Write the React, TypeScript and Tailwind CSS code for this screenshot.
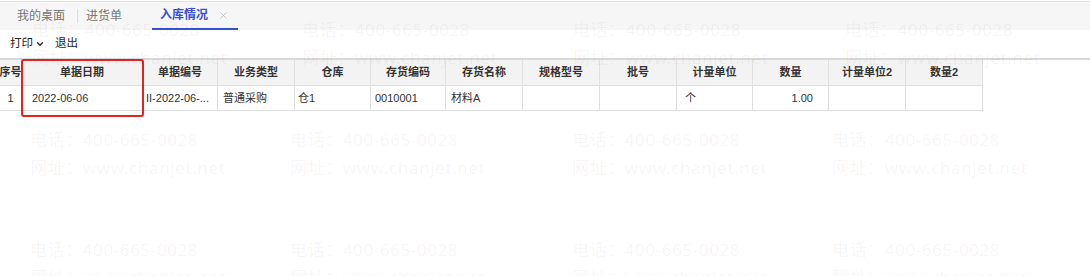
import { ChevronDown, X } from 'lucide-react';

const columns = [
  { title: '序号', width: 'w-[22px]' },
  { title: '单据日期', width: 'w-[121px]' },
  { title: '单据编号', width: 'w-[75px]' },
  { title: '业务类型', width: 'w-[77px]' },
  { title: '仓库', width: 'w-[76px]' },
  { title: '存货编码', width: 'w-[75px]' },
  { title: '存货名称', width: 'w-[77px]' },
  { title: '规格型号', width: 'w-[77px]' },
  { title: '批号', width: 'w-[77px]' },
  { title: '计量单位', width: 'w-[76px]' },
  { title: '数量', width: 'w-[76px]' },
  { title: '计量单位2', width: 'w-[77px]' },
  { title: '数量2', width: 'w-[77px]' },
];

// one row of data, padding per cell matches the screenshot
const row = [
  { text: '1', cls: 'justify-center' },
  { text: '2022-06-06', cls: 'pl-[10px]' },
  { text: 'II-2022-06-...', cls: 'pl-[3px]' },
  { text: '普通采购', cls: 'pl-[5px]' },
  { text: '仓1', cls: 'pl-[3px]' },
  { text: '0010001', cls: 'pl-[4px]' },
  { text: '材料A', cls: 'pl-[5px]' },
  { text: '', cls: '' },
  { text: '', cls: '' },
  { text: '个', cls: 'pl-[8px]' },
  { text: '1.00', cls: 'justify-end pr-[15px]' },
  { text: '', cls: '' },
  { text: '', cls: '' },
];

function Watermark({ className }: { className: string }) {
  return (
    <div
      className={`absolute flex flex-col text-[17px] leading-[28px] tracking-[0.6px] text-black/[0.05] whitespace-nowrap ${className}`}
      style={{ fontFamily: "'Noto Sans', 'Noto Sans CJK SC', sans-serif" }}
    >
      <span>电话：400-665-0028</span>
      <span>网址：www.chanjet.net</span>
    </div>
  );
}

export default function App() {
  return (
    <div
      className="relative w-[1090px] h-[276px] overflow-hidden bg-white text-[12px] text-[#333]"
      style={{ fontFamily: "'Liberation Sans', 'Noto Sans CJK SC', sans-serif" }}
    >
      {/* tab bar */}
      <div className="pt-px">
        <div className="flex items-end h-[29px] border-t border-[#e2e2e2] bg-[#f6f6f6]">
          <div className="flex items-center h-[28px]">
            <span className="pl-[17px] pr-[12px] text-[#777]">我的桌面</span>
            <span className="w-px h-[14px] bg-[#dcdcdc]" />
            <span className="pl-[8px] pr-[30px] text-[#777]">进货单</span>
          </div>
          <div className="flex items-center gap-[10px] h-[28px] pl-[8px] pr-[9px] border-b-2 border-[#3550d6]">
            <span className="font-bold text-[#3550d6]">入库情况</span>
            <X size={11} strokeWidth={1.5} className="text-[#b0b0b0]" />
          </div>
        </div>
      </div>

      {/* toolbar */}
      <div className="flex items-center h-[28px] pl-[10px] gap-[10px] text-[11.5px] text-[#222]">
        <span className="flex items-center gap-[2px]">
          打印
          <ChevronDown size={10} strokeWidth={3} />
        </span>
        <span>退出</span>
      </div>

      {/* table */}
      <div className="border-t-2 border-[#d8d8d8] text-[11px]">
        <div className="flex h-[26px] bg-[#f3f3f3] border-b border-[#e0e0e0] w-[983px]">
          {columns.map((c) => (
            <div
              key={c.title}
              className={`${c.width} shrink-0 flex items-center justify-center border-r border-[#e0e0e0] font-bold text-[#333] whitespace-nowrap overflow-hidden`}
            >
              {c.title}
            </div>
          ))}
        </div>
        <div className="flex h-[25px] border-b border-[#e0e0e0] w-[983px]">
          {columns.map((c, i) => (
            <div
              key={c.title}
              className={`${c.width} shrink-0 flex items-center border-r border-[#e0e0e0] whitespace-nowrap overflow-hidden ${row[i].cls}`}
            >
              {row[i].text}
            </div>
          ))}
        </div>
      </div>

      {/* highlight box */}
      <div className="absolute left-[21px] top-[59px] w-[123px] h-[58px] border-2 border-[#e32222] rounded-[3px]" />

      {/* watermarks */}
      <div className="absolute inset-0 pointer-events-none">
        <Watermark className="left-[32px] top-[16px]" />
        <Watermark className="left-[302px] top-[16px]" />
        <Watermark className="left-[573px] top-[16px]" />
        <Watermark className="left-[845px] top-[16px]" />
        <Watermark className="left-[30px] top-[126px]" />
        <Watermark className="left-[290px] top-[126px]" />
        <Watermark className="left-[572px] top-[126px]" />
        <Watermark className="left-[832px] top-[126px]" />
        <Watermark className="left-[30px] top-[236px]" />
        <Watermark className="left-[290px] top-[236px]" />
        <Watermark className="left-[572px] top-[236px]" />
        <Watermark className="left-[832px] top-[236px]" />
      </div>
    </div>
  );
}
